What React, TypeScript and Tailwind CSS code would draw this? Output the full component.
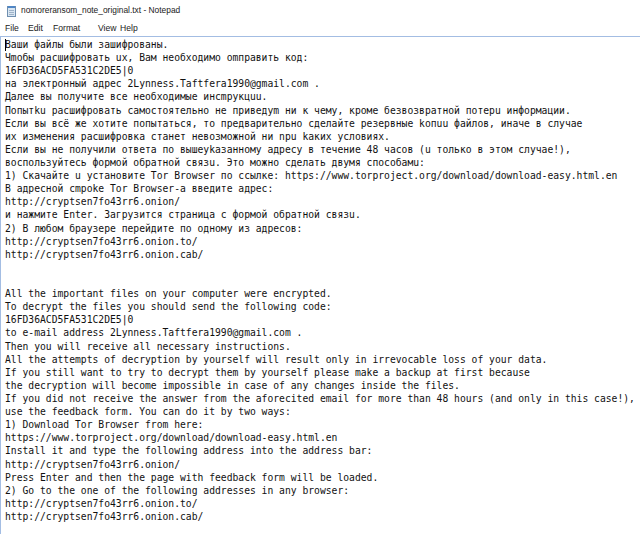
const lines = [
  "Ваши файлы были зашифрованы.",
  "Чmобы расшифровать ux, Вам необходимо omправить код:",
  "16FD36ACD5FA531C2DE5|0",
  "на электронный адрес 2Lynness.Taftfera1990@gmail.com .",
  "Далее вы получите все необходимые инсmрукцuu.",
  "Попытku расшифровать самостоятельно не приведуm ни к чему, кроме безвозвратной потерu информации.",
  "Если вы всё же хотите попытаться, то предварительно сделайте резервные kопuu файлов, иначе в случае",
  "их изменения расшифровка станет невозможной ни npu kаких условиях.",
  "Если вы не получили ответа по вышеуkазанному адресу в течение 48 часов (u только в этом случае!),",
  "воспользуйтесь формой обратной связu. Это можно сделать двумя способамu:",
  "1) Скачайте u установите Tor Browser по ссылке: https://www.torproject.org/download/download-easy.html.en",
  "В адресной сmроke Tor Browser-a введите адрес:",
  "http://cryptsen7fo43rr6.onion/",
  "и нажмите Enter. Загрузится страница с формой обратной связu.",
  "2) В любом браузере перейдите по одному из адресов:",
  "http://cryptsen7fo43rr6.onion.to/",
  "http://cryptsen7fo43rr6.onion.cab/",
  "",
  "",
  "All the important files on your computer were encrypted.",
  "To decrypt the files you should send the following code:",
  "16FD36ACD5FA531C2DE5|0",
  "to e-mail address 2Lynness.Taftfera1990@gmail.com .",
  "Then you will receive all necessary instructions.",
  "All the attempts of decryption by yourself will result only in irrevocable loss of your data.",
  "If you still want to try to decrypt them by yourself please make a backup at first because",
  "the decryption will become impossible in case of any changes inside the files.",
  "If you did not receive the answer from the aforecited email for more than 48 hours (and only in this case!),",
  "use the feedback form. You can do it by two ways:",
  "1) Download Tor Browser from here:",
  "https://www.torproject.org/download/download-easy.html.en",
  "Install it and type the following address into the address bar:",
  "http://cryptsen7fo43rr6.onion/",
  "Press Enter and then the page with feedback form will be loaded.",
  "2) Go to the one of the following addresses in any browser:",
  "http://cryptsen7fo43rr6.onion.to/",
  "http://cryptsen7fo43rr6.onion.cab/",
];

function NotepadIcon() {
  return (
    <svg width="11" height="12" viewBox="0 0 11 12" className="shrink-0">
      <rect x="1.5" y="1.5" width="8" height="10" fill="#d9e6f2" stroke="#6f8fb0" />
      <rect x="2" y="1" width="7" height="2" fill="#4f86c6" />
      <line x1="3" y1="5.5" x2="8" y2="5.5" stroke="#9fb3c8" />
      <line x1="3" y1="7.5" x2="8" y2="7.5" stroke="#9fb3c8" />
      <line x1="3" y1="9.5" x2="8" y2="9.5" stroke="#9fb3c8" />
    </svg>
  );
}

export default function App() {
  return (
    <div className="w-[640px] h-[534px] bg-white overflow-hidden flex flex-col font-['Liberation_Sans',sans-serif]">
      <div className="h-[21px] flex items-center gap-[4px] pl-[6px] text-[8.4px] text-[#1a1a1a]">
        <NotepadIcon />
        <span>nomoreransom_note_original.txt - Notepad</span>
      </div>
      <div className="h-[15px] flex items-center pl-[5px] text-[8.6px] text-[#1a1a1a]">
        <span className="w-[23px] shrink-0">File</span>
        <span className="w-[25px] shrink-0">Edit</span>
        <span className="w-[45px] shrink-0">Format</span>
        <span className="w-[22px] shrink-0">View</span>
        <span className="shrink-0">Help</span>
      </div>
      <div className="flex-1 border-t border-l border-[#a3bde3] pl-[4px] pt-[1px]">
        <div className="relative font-['DejaVu_Sans_Mono','Liberation_Mono',monospace] text-[9.7px] leading-[13.12px] text-[#111] whitespace-pre">
          <span className="absolute left-0 top-[1px] w-px h-[12px] bg-black" />
          {lines.map((l, i) => (
            <div key={i} className="h-[13.12px]">{l}</div>
          ))}
        </div>
      </div>
    </div>
  );
}
